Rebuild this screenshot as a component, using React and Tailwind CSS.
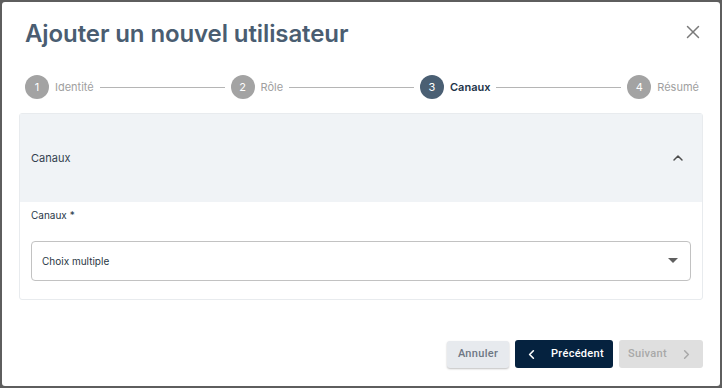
import React from "react";
import { X, ChevronUp, ChevronLeft, ChevronRight } from "lucide-react";

const steps = [
  { n: 1, label: "Identité" },
  { n: 2, label: "Rôle" },
  { n: 3, label: "Canaux", active: true },
  { n: 4, label: "Résumé" },
];

const Step = ({ step }) => (
  <div className="flex items-center gap-[6px] shrink-0">
    <div
      className={
        "w-6 h-6 rounded-full flex items-center justify-center text-[11px] text-white " +
        (step.active ? "bg-[#4a5f73]" : "bg-[#a3a3a3]")
      }
    >
      {step.n}
    </div>
    <span
      className={
        "text-[11px] " +
        (step.active ? "font-semibold text-[#1d3349]" : "text-[#a0a0a0]")
      }
    >
      {step.label}
    </span>
  </div>
);

export default function App() {
  return (
    <div className="w-[722px] h-[388px] bg-[#5e5e5e] p-[2px] font-['Inter',sans-serif]">
      <div className="w-full h-full bg-white rounded-[3px] flex flex-col px-[17px] pt-[16px]">
        {/* Header */}
        <div className="flex items-start justify-between pl-[6px]">
          <h1 className="text-[24px] leading-[32px] font-semibold text-[#4a5d71] tracking-[-0.1px]">
            Ajouter un nouvel utilisateur
          </h1>
          <button className="mt-[3px] mr-[-1px] text-[#7a7a7a]">
            <X size={22} strokeWidth={1.6} />
          </button>
        </div>

        {/* Stepper */}
        <div className="flex items-center pl-[6px] pr-[4px] mt-[25px] h-6">
          {steps.map((s, i) => (
            <React.Fragment key={s.n}>
              <Step step={s} />
              {i < steps.length - 1 && (
                <div className="flex-1 h-px bg-[#b5b5b5] mx-[6px]" />
              )}
            </React.Fragment>
          ))}
        </div>

        {/* Accordion */}
        <div className="mt-[14px] border border-[#e8ebee] rounded-[3px] flex flex-col">
          <div className="h-[88px] bg-[#f0f3f6] flex items-center justify-between pl-[11px] pr-[16px]">
            <span className="text-[11px] text-[#33414f]">Canaux</span>
            <ChevronUp size={16} strokeWidth={2.2} className="text-[#4d4d4d]" />
          </div>
          <div className="px-[11px] pt-[6px] pb-[18px]">
            <div className="text-[10px] leading-[14px] text-[#273848]">Canaux *</div>
            <div className="mt-[19px] h-[40px] border border-[#c2c2c2] rounded-[4px] flex items-center justify-between pl-[10px] pr-[12px]">
              <span className="text-[10px] text-[#2a3745]">Choix multiple</span>
              <svg width="10" height="6" viewBox="0 0 10 6">
                <path d="M0 0h10L5 5z" fill="#5f5f5f" />
              </svg>
            </div>
          </div>
        </div>

        {/* Footer */}
        <div className="mt-auto mb-[18px] flex justify-end gap-[6px] font-['Roboto',sans-serif] text-[11px] font-medium tracking-[0.3px]">
          <button className="w-[62px] h-[27px] mt-[1px] rounded-[3px] bg-[#e7eaee] text-[#6e7784] shadow-[0_1px_2px_rgba(0,0,0,0.25)]">
            Annuler
          </button>
          <button className="w-[98px] h-[28px] rounded-[3px] bg-[#05223f] text-white flex items-center justify-center gap-[12px]">
            <ChevronLeft size={15} strokeWidth={2.6} />
            <span>Précédent</span>
          </button>
          <button className="w-[84px] h-[28px] rounded-[3px] bg-[#dfdfdf] text-[#a8a8a8] flex items-center justify-center gap-[12px]">
            <span>Suivant</span>
            <ChevronRight size={15} strokeWidth={2.4} />
          </button>
        </div>
      </div>
    </div>
  );
}
